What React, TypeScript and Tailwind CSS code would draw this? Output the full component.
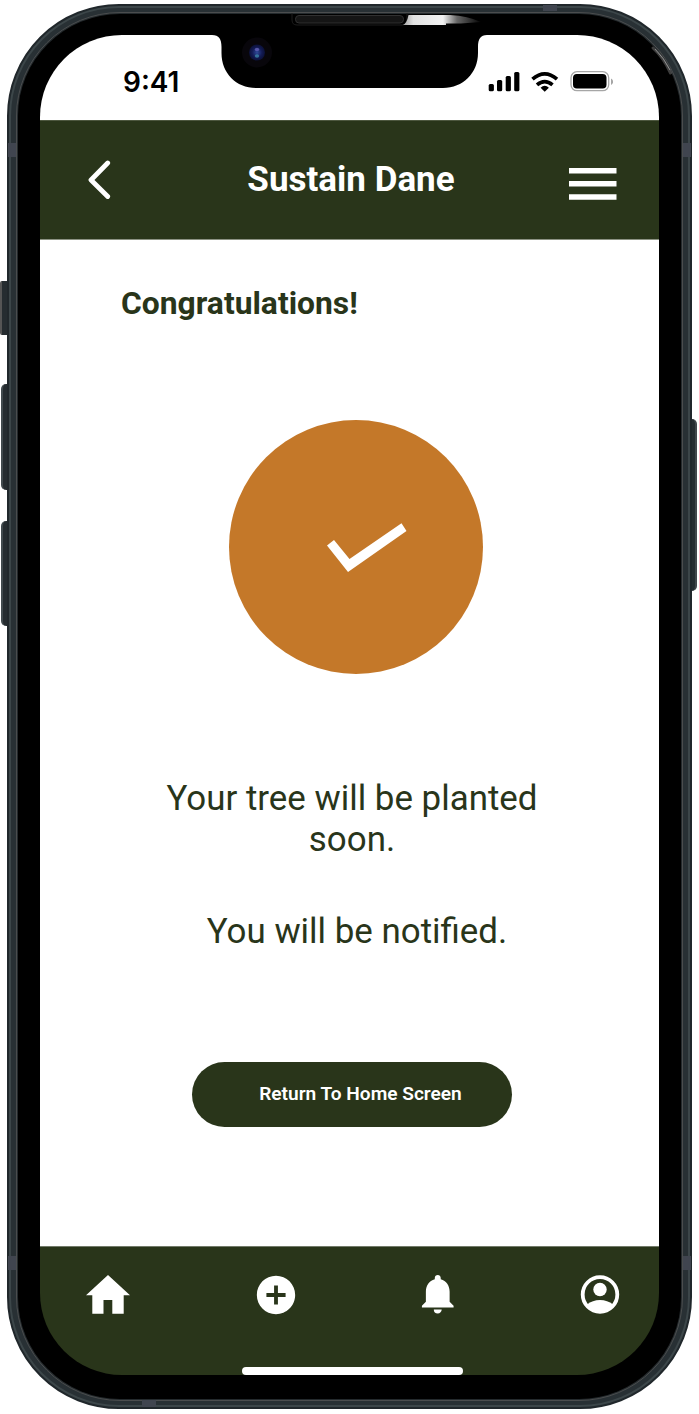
import React from "react";
import { MdAddCircle, MdNotifications } from "react-icons/md";

function DeviceDetails() {
  return (
    <svg className="pointer-events-none absolute inset-0" width="699" height="1414" viewBox="0 0 699 1414" fill="none">
      <defs>
        <linearGradient id="glare" x1="404" x2="482" y1="0" y2="0" gradientUnits="userSpaceOnUse">
          <stop offset="0" stopColor="#aaa" />
          <stop offset=".12" stopColor="#e2e2e2" />
          <stop offset=".5" stopColor="#f2f2f2" />
          <stop offset=".68" stopColor="#666" />
          <stop offset="1" stopColor="#000" />
        </linearGradient>
        <radialGradient id="lens">
          <stop offset="0" stopColor="#2f4a9c" />
          <stop offset=".6" stopColor="#131b55" />
          <stop offset="1" stopColor="#0b1038" />
        </radialGradient>
      </defs>
      <path d="M209 34V35H212C219 35 221.500 39 221.500 47V53C221.500 73 236 88 256 88H443C463 88 478 73 478 53V47C478 39 480.500 35 487 35H490V34Z" fill="#000" />
      <path d="M292 13v7q0 5 5 5h105q5 0 5-5v-7" stroke="#1c1c1c" />
      <rect x="295.500" y="15.500" width="108" height="7.500" rx="3.500" fill="#151515" stroke="#303030" />
      <path d="M403 25Q407 23 408.500 15H450Q468 16 481 22L461 23.500H446V25Z" fill="url(#glare)" />
      <circle cx="257" cy="52.500" r="15" fill="#08060b" />
      <circle cx="257" cy="52.500" r="8" fill="url(#lens)" />
      <ellipse cx="257" cy="49.500" rx="2.200" ry="1.700" fill="#6a65bd" opacity=".75" />
      <ellipse cx="257" cy="56" rx="2.200" ry="1.700" fill="#3d8bab" opacity=".75" />
      <path d="M653 48Q663 57 670.500 73" stroke="#777" strokeWidth="3" strokeLinecap="round" opacity=".5" />
      <path d="M655 49Q664 58 670 70" stroke="#ddd" strokeWidth="1" opacity=".5" />
      <g fill="#40454f">
        <path d="M8 143h8v14H8zM683 143h8v14h-8zM8 1256h8v14H8zM683 1256h8v14h-8zM543 5h14v6h-14zM142 1400h14v7h-14z" />
      </g>
    </svg>
  );
}

function StatusBar() {
  return (
    <div className="flex h-[85px] shrink-0 items-start justify-between bg-white pt-[30px] pr-[46px] pl-[83px] text-black">
      <span className="font-['Inter',sans-serif] text-[28px] leading-[34px] font-semibold">9:41</span>
      <svg className="mt-[6px]" width="125" height="21" viewBox="488 71 125 21">
        <g fill="#000">
          <rect x="488.700" y="84" width="5.200" height="7.300" rx="1.500" />
          <rect x="497" y="80" width="5.200" height="11.300" rx="1.500" />
          <rect x="505.700" y="76" width="5.200" height="15.300" rx="1.500" />
          <rect x="514.200" y="72" width="5.200" height="19.300" rx="1.500" />
        </g>
        <g stroke="#000" strokeWidth="3.700" fill="none">
          <path d="M532.500 79.200Q544.700 68.600 557 79.200" />
          <path d="M537 84.800Q544.700 78.300 552.500 84.800" />
        </g>
        <path d="M540.600 87.700Q544.700 84 548.900 87.700L544.700 91.800Z" fill="#000" />
        <rect x="571" y="71.700" width="37.700" height="19" rx="6" fill="none" stroke="#a6a6a6" strokeWidth="1.300" />
        <rect x="573" y="74" width="33.500" height="14.500" rx="3.800" fill="#000" />
        <path d="M611 78.500Q615.500 81.500 611 85Z" fill="#a6a6a6" />
      </svg>
    </div>
  );
}

function Header() {
  return (
    <header className="flex h-[120px] shrink-0 items-center border-t border-b border-t-[#4d573f] border-b-[#8c9283] bg-[#29351a] pr-[42px] pl-[48px] text-white">
      <svg width="24" height="40" viewBox="0 0 24 40" fill="none" stroke="currentColor" strokeWidth="4.800" strokeLinecap="round" strokeLinejoin="round">
        <path d="M19.700 3 3 20 19.700 36.500" />
      </svg>
      <h1 className="flex-1 pl-[21px] text-center text-[35px] leading-[42px] font-bold whitespace-nowrap">Sustain Dane</h1>
      <svg className="mt-[8px]" width="48" height="33" fill="currentColor">
        <path d="M0 0h47.500v5.400H0zM0 13.100h47.500v5.400H0zM0 26.300h47.500v5.400H0z" />
      </svg>
    </header>
  );
}

function BottomNav() {
  return (
    <footer className="flex h-[129px] shrink-0 flex-col items-center justify-between border-t border-[#727a69] bg-[#29351a] text-white">
      <nav className="flex w-full items-center justify-between pt-[24px] pr-[36px] pl-[46px]">
        <svg width="44" height="46" viewBox="0 0 44 46" fill="currentColor">
          <path d="M22 3 0 23.300h6.300v18.400h11.200V28h8.800v13.700h11.400V23.300H44Z" />
        </svg>
        <MdAddCircle size={46} className="relative left-[3.3px] ml-[27px]" />
        <MdNotifications size={47.500} className="relative -top-[1px] left-[1.5px] ml-[23px]" />
        <svg width="46" height="46" viewBox="0 0 46 46" className="ml-[24px]">
          <circle cx="23" cy="22.500" r="17.300" fill="none" stroke="currentColor" strokeWidth="3.800" />
          <circle cx="23" cy="17.500" r="6.700" fill="currentColor" />
          <path d="M10 32.500Q15.500 28 23 28T36 32.500L34 37Q29 40.500 23 40.500T12 37Z" fill="currentColor" />
        </svg>
      </nav>
      <div className="h-[8px] w-[221px] translate-x-[3px] rounded-full bg-white" />
    </footer>
  );
}

export default function App() {
  return (
    <div className="relative h-[1414px] w-[699px] overflow-hidden bg-white font-['Roboto',sans-serif] text-[#29351a]">
      <div className="absolute top-[281px] left-0 h-[54px] w-[12px] rounded-l-[2px] border-l-2 border-[#555] bg-[#252c30]" />
      <div className="absolute top-[384px] left-[1px] h-[106px] w-[12px] rounded-l-[5px] border-l-2 border-[#414a4e] bg-[#252c30]" />
      <div className="absolute top-[521px] left-[1px] h-[105px] w-[12px] rounded-l-[5px] border-l-2 border-[#414a4e] bg-[#252c30]" />
      <div className="absolute top-[419px] left-[687px] h-[172px] w-[10px] rounded-r-[5px] border-r-2 border-[#41474b] bg-[#252c30]" />
      <div className="relative mt-[4px] ml-[7px] h-[1405px] w-[685px] rounded-[112px] border-2 border-[#20272b] bg-[#3c4649] p-[2px]">
        <div className="h-full rounded-[108px] bg-[#283034] px-[5px] py-[4px]">
          <div className="h-full rounded-[104px] border border-[#4b4d4e] bg-[#242a2d] p-[1px]">
            <div className="h-full rounded-[102px] bg-black px-[22px] pt-[21px] pb-[24px]">
              <div className="flex h-[1340px] w-[619px] flex-col overflow-hidden rounded-[82px] bg-black">
                <StatusBar />
                <Header />
                <main className="flex min-h-0 flex-1 flex-col bg-white">
                  <h2 className="pt-[44px] pl-[81px] text-[31.800px] leading-[38px] font-bold">Congratulations!</h2>
                  <div className="mt-[98px] ml-[189px] flex h-[254px] w-[254px] shrink-0 items-center justify-center rounded-full bg-[#c47829]">
                    <svg width="80" height="50" viewBox="0 0 80 50" className="ml-[22px]" fill="white">
                      <path d="M0 23.500 7 18 22.500 37 74.500 1.300 79.500 9 21 50Z" />
                    </svg>
                  </div>
                  <p className="mt-[104px] ml-[112px] w-[400px] text-center text-[34.900px] leading-[41px]">
                    Your tree will be planted
                    <br />
                    soon.
                  </p>
                  <p className="mt-[51px] ml-[117px] w-[400px] text-center text-[34.900px] leading-[42px]">You will be notified.</p>
                  <button className="mt-[109px] ml-[152px] flex h-[65px] w-[320px] items-center justify-center rounded-full bg-[#29351a] pl-[17px] text-[19.100px] font-semibold text-white">
                    Return To Home Screen
                  </button>
                </main>
                <BottomNav />
              </div>
            </div>
          </div>
        </div>
      </div>
      <DeviceDetails />
    </div>
  );
}
